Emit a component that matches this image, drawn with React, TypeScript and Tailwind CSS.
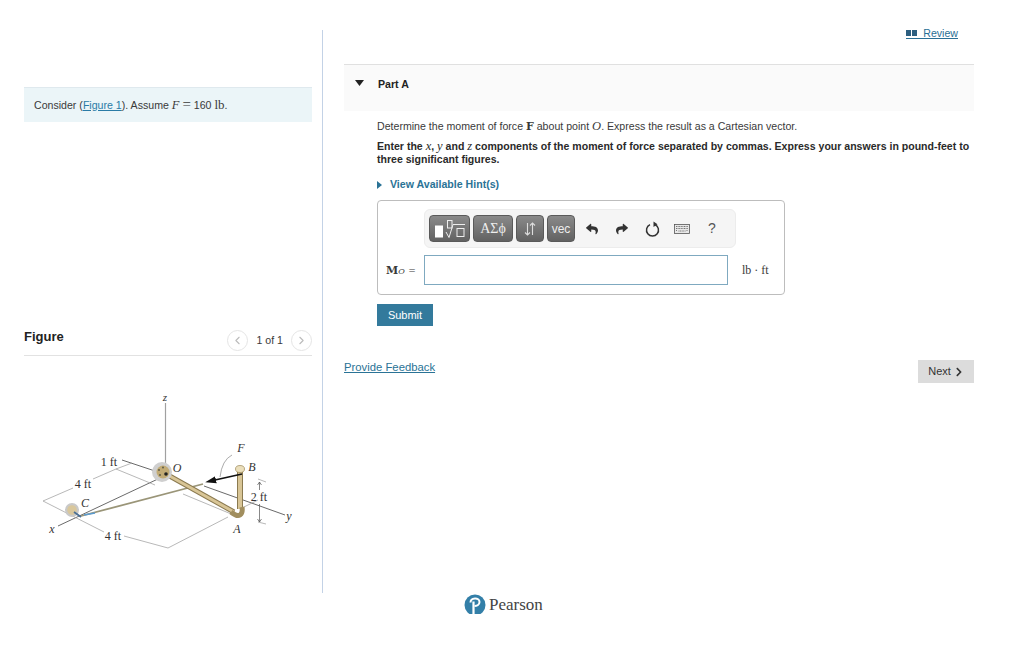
import { ChevronLeft, ChevronRight } from 'lucide-react';
import { FaChevronRight, FaReply, FaShare } from 'react-icons/fa';

const sans = 'font-["Liberation_Sans",Arial,sans-serif]';

function M({ children, bold }: { children: React.ReactNode; bold?: boolean }) {
  if (bold) return <span className='font-["DejaVu_Serif",serif] font-bold text-[11px] leading-none'>{children}</span>;
  return <span className='font-["Liberation_Serif",serif] italic font-normal text-[12.5px] leading-none'>{children}</span>;
}

function Figure() {
  const label = { fontFamily: '"Liberation Serif", serif', fontSize: 12, fill: '#333', textAnchor: 'middle' as const };
  return (
    <svg viewBox="24 380 288 170" className="block w-[288px] h-[170px]">
      <defs>
        <marker id="head" markerUnits="userSpaceOnUse" markerWidth="12" markerHeight="8" refX="1" refY="4" orient="auto">
          <path d="M0 0.500 L11 4 L0 7.500 Z" fill="#111" />
        </marker>
      </defs>
      {/* axes */}
      <line x1="165.500" y1="402" x2="165.500" y2="465" stroke="#a0a0a0" strokeWidth="1.200" />
      <path d="M58 525 L160 477" stroke="#444" strokeWidth="0.800" fill="none" />
      <path d="M122 459 L155 470 M204 485 L285 514" stroke="#444" strokeWidth="0.800" fill="none" />
      {/* dimension lines */}
      <g stroke="#999" strokeWidth="0.700" fill="none">
        <path d="M43 500 L73 487 M93 478 L116 468 L132 462" />
        <path d="M116 468 L155 484 M183 493 L236 515" />
        <path d="M43 500 L104 531 M124 535 L168 547 L228 516" />
        <path d="M258 478 L266 481 M258 521 L266 523 M244 506 L258 499" />
      </g>
      <path d="M259.500 481 V489 M259.500 503 V521 M257.500 484 L259.500 481 L261.500 484 M257.500 518 L259.500 521 L261.500 518" stroke="#555" strokeWidth="0.700" fill="none" />
      {/* rope */}
      <line x1="81" y1="515" x2="203" y2="483" stroke="#9a9578" strokeWidth="1.800" />
      <line x1="84" y1="514" x2="95" y2="512" stroke="#5b9bd0" strokeWidth="1.500" />
      <circle cx="72" cy="509" r="7" fill="#c9c9c9" />
      <circle cx="72" cy="509" r="4.800" fill="#d9c79c" />
      <path d="M74 511 L81 516" stroke="#4a6f95" strokeWidth="1.800" />
      {/* pipe */}
      <line x1="166" y1="473" x2="234" y2="511" stroke="#8b7a50" strokeWidth="5" />
      <line x1="166" y1="473" x2="234" y2="511" stroke="#d8c596" strokeWidth="3" />
      <line x1="240" y1="508" x2="240" y2="470" stroke="#8b7a50" strokeWidth="6" />
      <line x1="240" y1="508" x2="240" y2="470" stroke="#d8c596" strokeWidth="4" />
      <path d="M231 511 Q237 516 240 514 Q243 512 242 506" stroke="#a18e5e" strokeWidth="5" fill="none" />
      <ellipse cx="240" cy="468" rx="4.500" ry="3.500" fill="#ebdfbc" stroke="#9a8757" strokeWidth="0.700" />
      <circle cx="162" cy="471" r="10" fill="#cfcfcf" />
      <circle cx="163" cy="471" r="6.500" fill="#c2ab75" />
      <circle cx="159" cy="469" r="0.900" fill="#554" />
      <circle cx="163" cy="466.500" r="0.900" fill="#554" />
      <circle cx="160" cy="474" r="0.900" fill="#554" />
      <circle cx="166" cy="473" r="1.800" fill="#222" />
      {/* force */}
      <line x1="242" y1="473" x2="215" y2="479" stroke="#111" strokeWidth="1.500" markerEnd="url(#head)" />
      <path d="M220 476 Q222 459 232 454" stroke="#888" strokeWidth="0.700" fill="none" />
      {/* labels */}
      <text x="165" y="400" {...label} fontStyle="italic" fontSize="11">z</text>
      <text x="177" y="471" {...label} fontStyle="italic">O</text>
      <text x="241" y="451" {...label} fontStyle="italic">F</text>
      <text x="252" y="470" {...label} fontStyle="italic">B</text>
      <text x="237" y="532" {...label} fontStyle="italic">A</text>
      <text x="85" y="506" {...label} fontStyle="italic">C</text>
      <text x="52" y="532" {...label} fontStyle="italic">x</text>
      <text x="289" y="519" {...label} fontStyle="italic">y</text>
      <text x="109" y="465" {...label}>1 ft</text>
      <text x="83" y="487" {...label}>4 ft</text>
      <text x="113" y="539" {...label}>4 ft</text>
      <text x="259" y="500" {...label}>2 ft</text>
    </svg>
  );
}

function ToolBtn({ w, children }: { w: string; children: React.ReactNode }) {
  return (
    <div className={`${w} h-[27px] rounded-[4px] border border-[#5a5a5a] bg-gradient-to-b from-[#8a8a8a] to-[#626262] text-white flex items-center justify-center`}>
      {children}
    </div>
  );
}

function Toolbar() {
  return (
    <div className="w-[312px] h-[39px] rounded-[6px] border border-[#ececec] bg-[#f5f5f5] flex items-center pl-[4px] text-[#333]">
      <div className="flex gap-[3px]">
        <ToolBtn w="w-[41px]">
          <svg width="33" height="22" viewBox="0 0 33 22" fill="none" stroke="#eee" strokeWidth="1">
            <rect x="2" y="7.500" width="8" height="12" fill="#fff" stroke="none" />
            <rect x="14.500" y="2.500" width="4.500" height="7.500" />
            <path d="M13 14 L16 19.500 L20 6.500 L32 6.500" />
            <rect x="24" y="10.500" width="7" height="8" />
          </svg>
        </ToolBtn>
        <ToolBtn w="w-[40px]">
          <span className='font-["Liberation_Serif",serif] text-[14px] text-[#eee]'>ΑΣϕ</span>
        </ToolBtn>
        <ToolBtn w="w-[28px]">
          <svg width="14" height="14" viewBox="0 0 14 14" fill="none" stroke="#ddd" strokeWidth="1.100">
            <path d="M4.500 1 V13 M2 10.500 L4.500 13 L7 10.500 M9.500 13 V1 M7 3.500 L9.500 1 L12 3.500" />
          </svg>
        </ToolBtn>
        <ToolBtn w="w-[28px]">
          <span className="text-[12px] text-[#eee]">vec</span>
        </ToolBtn>
      </div>
      <div className="w-[31px] ml-[1px] flex justify-center"><FaReply size={12} /></div>
      <div className="w-[30px] flex justify-center"><FaShare size={12} /></div>
      <div className="w-[30px] flex justify-center">
        <svg width="15" height="16" viewBox="0 0 15 16" fill="none" stroke="#333" strokeWidth="1.500">
          <path d="M5 3.600 A6 6 0 1 0 10 3.600" />
          <path d="M8.500 0.500 L8.500 6 L12.500 3.200 Z" fill="#333" stroke="none" />
        </svg>
      </div>
      <div className="w-[30px] flex justify-center">
        <svg width="16" height="10" viewBox="0 0 16 10" fill="#e8e8e8" stroke="#555" strokeWidth="0.800">
          <rect x="0.500" y="0.500" width="15" height="9" />
          <path d="M2 2.500 H14 M2 4.500 H14 M2 6.500 H3.500 M4.500 7 H11.500 M12.500 6.500 H14" strokeDasharray="1 0.600" />
        </svg>
      </div>
      <div className="w-[30px] flex justify-center text-[14px] text-[#555]">?</div>
    </div>
  );
}

export default function App() {
  return (
    <div className={`${sans} relative w-[1024px] h-[657px] overflow-hidden bg-white flex text-[10.6px] text-[#3a3a3a]`}>
      {/* left column */}
      <div className="w-[288px] ml-[24px] pt-[87px]">
        <div className="h-[35px] bg-[#ebf5f8] border-t border-[#dfe9ee] pl-[10px] flex items-center">
          <span>
            Consider (<span className="text-[#2a7ba6] underline">Figure 1</span>). Assume <M>F</M> <span className='font-["Liberation_Serif",serif] text-[15px] leading-none'>=</span> 160 <span className='font-["Liberation_Serif",serif] text-[13px] leading-none'>lb</span>.
          </span>
        </div>
        <div className="mt-[207px] h-[27px] border-b border-[#e2e2e2] flex items-start justify-between">
          <span className="text-[13px] font-bold text-[#222] leading-[15px]">Figure</span>
          <div className="flex items-center gap-[8px] pt-[1px]">
            <span className="w-[21px] h-[21px] rounded-full border border-[#e5e5e5] flex items-center justify-center text-[#bbb]"><ChevronLeft size={13} /></span>
            <span>1 of 1</span>
            <span className="w-[21px] h-[21px] rounded-full border border-[#e5e5e5] flex items-center justify-center text-[#bbb]"><ChevronRight size={13} /></span>
          </div>
        </div>
        <div className="mt-[25px]"><Figure /></div>
      </div>

      {/* divider */}
      <div className="ml-[10px] mt-[30px] w-[1px] h-[563px] bg-[#c3d2e6]" />

      {/* right column */}
      <div className="ml-[21px] w-[630px]">
        <div className="h-[34px] pt-[28px] pr-[16px] flex justify-end items-start">
          <span className="flex items-center text-[#2a6f95] leading-[13px] border-b border-[#2a6f95] h-[11px]">
            <svg width="11" height="6" viewBox="0 0 11 6" className="mr-[6px]" fill="#2d5f80"><rect width="5" height="6" /><rect x="6" width="5" height="6" /></svg>
            <span>Review</span>
          </span>
        </div>
        <div className="mt-[30px] h-[47px] bg-[#fafafa] border-t border-[#e0e0e0] flex items-start pt-[12px]">
          <svg width="9" height="6" viewBox="0 0 9 6" className="ml-[11px] mt-[3px]" fill="#222"><path d="M0 0 H9 L4.500 6 Z" /></svg>
          <span className="ml-[14px] font-bold text-[#222] leading-[14px]">Part A</span>
        </div>

        <div className="pl-[33px]">
          <p className="mt-[9px] leading-[13px]">
            Determine the moment of force <M bold>F</M> about point <M>O</M>. Express the result as a Cartesian vector.
          </p>
          <p className="mt-[7px] font-bold text-[10.550px] leading-[13px] w-[600px] text-[#2a2a2a]">
            Enter the <M>x</M>, <M>y</M> and <M>z</M> components of the moment of force separated by commas. Express your answers in pound-feet to three significant figures.
          </p>
          <div className="mt-[12px] flex items-center font-bold text-[#2a7396] leading-[13px]">
            <svg width="5" height="8" viewBox="0 0 5 8" className="mr-[8px]" fill="#2a7396"><path d="M0 0 L5 4 L0 8 Z" /></svg>
            View Available Hint(s)
          </div>

          <div className="mt-[9px] w-[408px] h-[95px] rounded-[4px] border border-[#bdbdbd] flex flex-col items-start pl-[46px] pt-[8px] relative">
            <Toolbar />
            <div className="mt-[7px] flex items-center">
              <div className="w-[304px] h-[30px] border border-[#7fa9c0] bg-white" />
              <span className='ml-[14px] font-["Liberation_Serif",serif] text-[12px]'>lb · ft</span>
            </div>
            <span className='absolute left-[8px] top-[62px] font-["DejaVu_Serif",serif] text-[11px] whitespace-nowrap'>
              <b>M</b><i className="text-[8px]">O</i> <span className="text-[9px]">=</span>
            </span>
          </div>

          <div className="mt-[9px] w-[56px] h-[22px] bg-[#337a9c] text-white text-[11px] flex items-center justify-center">Submit</div>
        </div>

        <div className="mt-[34px] flex items-start justify-between">
          <span className="text-[11.300px] leading-[14px] text-[#2a7396] underline">Provide Feedback</span>
          <div className="w-[56px] h-[23px] bg-[#dcdcdc] flex items-center justify-center gap-[3px] text-[11px] text-[#333]">
            Next <FaChevronRight size={10} />
          </div>
        </div>

        <div className="mt-[211px] ml-[120px] h-[20px] overflow-hidden flex items-start">
          <svg width="22" height="22" viewBox="0 0 22 22" className="shrink-0">
            <circle cx="11" cy="11" r="10.500" fill="#337fa8" />
            <path d="M6.500 8.500 C6.500 3.500 15.500 3 15.500 8 C15.500 11 12.500 12 10.500 12" stroke="#fff" strokeWidth="2" fill="none" />
            <path d="M9.500 7.500 V20" stroke="#fff" strokeWidth="2.200" fill="none" />
          </svg>
          <span className='ml-[3px] font-["Liberation_Serif",serif] text-[17px] leading-[21px] text-[#444]'>Pearson</span>
        </div>
      </div>
    </div>
  );
}
